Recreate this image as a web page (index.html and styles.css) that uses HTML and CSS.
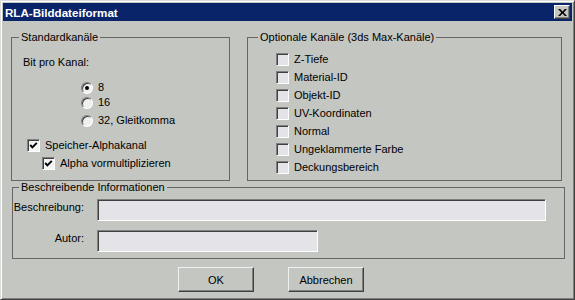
FILE: index.html
```html
<!DOCTYPE html>
<html lang="de">
<head>
    <meta charset="UTF-8">
    <title>RLA-Bilddateiformat</title>
    <link rel="stylesheet" href="styles.css">
</head>
<body>
    <div class="window">
        <div class="titlebar">
            <span class="title">RLA-Bilddateiformat</span>
            <span class="close-btn">
                <svg width="9" height="7" viewBox="0 0 9 7"><path d="M0 0h2.2l2.3 2.4 2.3-2.4H9L5.7 3.5 9 7H6.8L4.5 4.6 2.2 7H0l3.3-3.5z" fill="#000"/></svg>
            </span>
        </div>

        <div class="content">
            <div class="top-row">
                <fieldset class="group group-std">
                    <legend>Standardkanäle</legend>
                    <div class="bit-label">Bit pro Kanal:</div>
                    <div class="opt radio-row first"><span class="radio checked"></span>8</div>
                    <div class="opt radio-row"><span class="radio"></span>16</div>
                    <div class="opt radio-row last"><span class="radio"></span>32, Gleitkomma</div>
                    <div class="opt check-alpha"><span class="check on"><svg width="9" height="9" viewBox="0 0 9 9"><polyline points="1.2,4 3.4,6.4 7.8,1.8" fill="none" stroke="#000" stroke-width="1.9"/></svg></span>Speicher-Alphakanal</div>
                    <div class="opt check-premult"><span class="check on"><svg width="9" height="9" viewBox="0 0 9 9"><polyline points="1.2,4 3.4,6.4 7.8,1.8" fill="none" stroke="#000" stroke-width="1.9"/></svg></span>Alpha vormultiplizieren</div>
                </fieldset>

                <fieldset class="group group-opt">
                    <legend>Optionale Kanäle (3ds Max-Kanäle)</legend>
                    <div class="opt opt-row"><span class="check"></span>Z-Tiefe</div>
                    <div class="opt opt-row"><span class="check"></span>Material-ID</div>
                    <div class="opt opt-row"><span class="check"></span>Objekt-ID</div>
                    <div class="opt opt-row"><span class="check"></span>UV-Koordinaten</div>
                    <div class="opt opt-row"><span class="check"></span>Normal</div>
                    <div class="opt opt-row"><span class="check"></span>Ungeklammerte Farbe</div>
                    <div class="opt opt-row"><span class="check"></span>Deckungsbereich</div>
                </fieldset>
            </div>

            <fieldset class="group group-info">
                <legend>Beschreibende Informationen</legend>
                <div class="info-row">
                    <span class="info-label">Beschreibung:</span>
                    <span class="textbox wide"></span>
                </div>
                <div class="info-row second">
                    <span class="info-label">Autor:</span>
                    <span class="textbox short"></span>
                </div>
            </fieldset>

            <div class="buttons">
                <span class="btn">OK</span>
                <span class="btn">Abbrechen</span>
            </div>
        </div>
    </div>
</body>
</html>
```

FILE: styles.css
```css
body {
    margin: 0;
    font-family: 'Liberation Sans', Arial, sans-serif;
    font-size: 11px;
    color: #000;
    background-color: #c4c6c1;
}

.window {
    width: 575px;
    height: 300px;
    box-sizing: border-box;
    padding: 2px;
    background-color: #c4c6c1;
    border: 1px solid;
    border-color: #dcdcdc #404040 #404040 #dcdcdc;
    box-shadow: inset 1px 1px #fff, inset -1px -1px #808080;
}

/* Titelleiste */
.titlebar {
    height: 18px;
    display: flex;
    align-items: center;
    justify-content: space-between;
    background-color: #0a246a;
    padding-left: 2px;
}

.title {
    color: #fff;
    font-weight: bold;
    font-size: 11.6px;
}

.close-btn {
    width: 16px;
    height: 14px;
    box-sizing: border-box;
    margin-right: 2px;
    display: flex;
    align-items: center;
    justify-content: center;
    background-color: #c4c6c1;
    border: 1px solid;
    border-color: #fff #404040 #404040 #fff;
    box-shadow: inset -1px -1px #808080;
}

.content {
    padding: 10px 0 0 8px;
}

.top-row {
    display: flex;
    gap: 17px;
}

/* Gruppenrahmen */
.group {
    margin: 0;
    padding: 0;
    min-width: 0;
    box-sizing: border-box;
    border: 1px solid #666;
}

.group legend {
    padding: 0 2px;
    line-height: 13px;
}

.group-std {
    width: 219px;
    height: 150px;
}

.group-std legend {
    margin-left: 7px;
}

.group-opt {
    width: 315px;
    height: 150px;
}

.group-opt legend {
    margin-left: 10px;
}

.group-info {
    width: 553px;
    height: 78px;
    margin-left: 1px;
}

.group-info legend {
    margin-left: 6px;
}

/* Optionen */
.opt {
    display: flex;
    align-items: center;
    height: 13px;
    line-height: 13px;
}

.bit-label {
    margin: 12px 0 0 11px;
    line-height: 13px;
}

.radio-row {
    margin-left: 69px;
    margin-top: 2px;
}

.radio-row.first {
    margin-top: 12px;
}

.radio-row.last {
    margin-top: 5px;
}

.check-alpha {
    margin: 12px 0 0 15px;
}

.check-premult {
    margin: 5px 0 0 30px;
}

.opt-row {
    margin: 5px 0 0 28px;
}

.opt-row:first-of-type {
    margin-top: 9px;
}

.radio {
    width: 12px;
    height: 12px;
    box-sizing: border-box;
    margin-right: 5px;
    border-radius: 50%;
    border: 1px solid;
    border-color: #808080 #fff #fff #808080;
    box-shadow: inset 1px 1px #404040;
    background-color: #f0f0f0;
    display: flex;
    align-items: center;
    justify-content: center;
}

.radio.checked::after {
    content: "";
    width: 4px;
    height: 4px;
    border-radius: 50%;
    background-color: #000;
}

.check {
    width: 13px;
    height: 13px;
    box-sizing: border-box;
    margin-right: 5px;
    border: 1px solid;
    border-color: #808080 #fff #fff #808080;
    box-shadow: inset 1px 1px #404040;
    background-color: #e4e3e8;
    display: flex;
    align-items: center;
    justify-content: center;
}

.check.on {
    background-color: #f4f4f4;
}

/* Beschreibung */
.info-row {
    display: flex;
    align-items: flex-start;
    margin-top: 5px;
}

.info-row.second {
    margin-top: 9px;
}

.info-label {
    width: 71px;
    text-align: right;
    padding-top: 2px;
    line-height: 13px;
}

.textbox {
    height: 22px;
    margin-left: 13px;
    box-sizing: border-box;
    border: 1px solid;
    border-color: #808080 #fff #fff #808080;
    box-shadow: inset 1px 1px #404040;
    background-color: #e4e3e8;
}

.textbox.wide {
    width: 449px;
}

.textbox.short {
    width: 221px;
}

/* Schaltflächen */
.buttons {
    display: flex;
    gap: 34px;
    margin: 8px 0 0 167px;
}

.btn {
    width: 76px;
    height: 25px;
    box-sizing: border-box;
    display: flex;
    align-items: center;
    justify-content: center;
    border: 1px solid;
    border-color: #f0f0f0 #404040 #404040 #f0f0f0;
    box-shadow: inset -1px -1px #808080;
}
```
